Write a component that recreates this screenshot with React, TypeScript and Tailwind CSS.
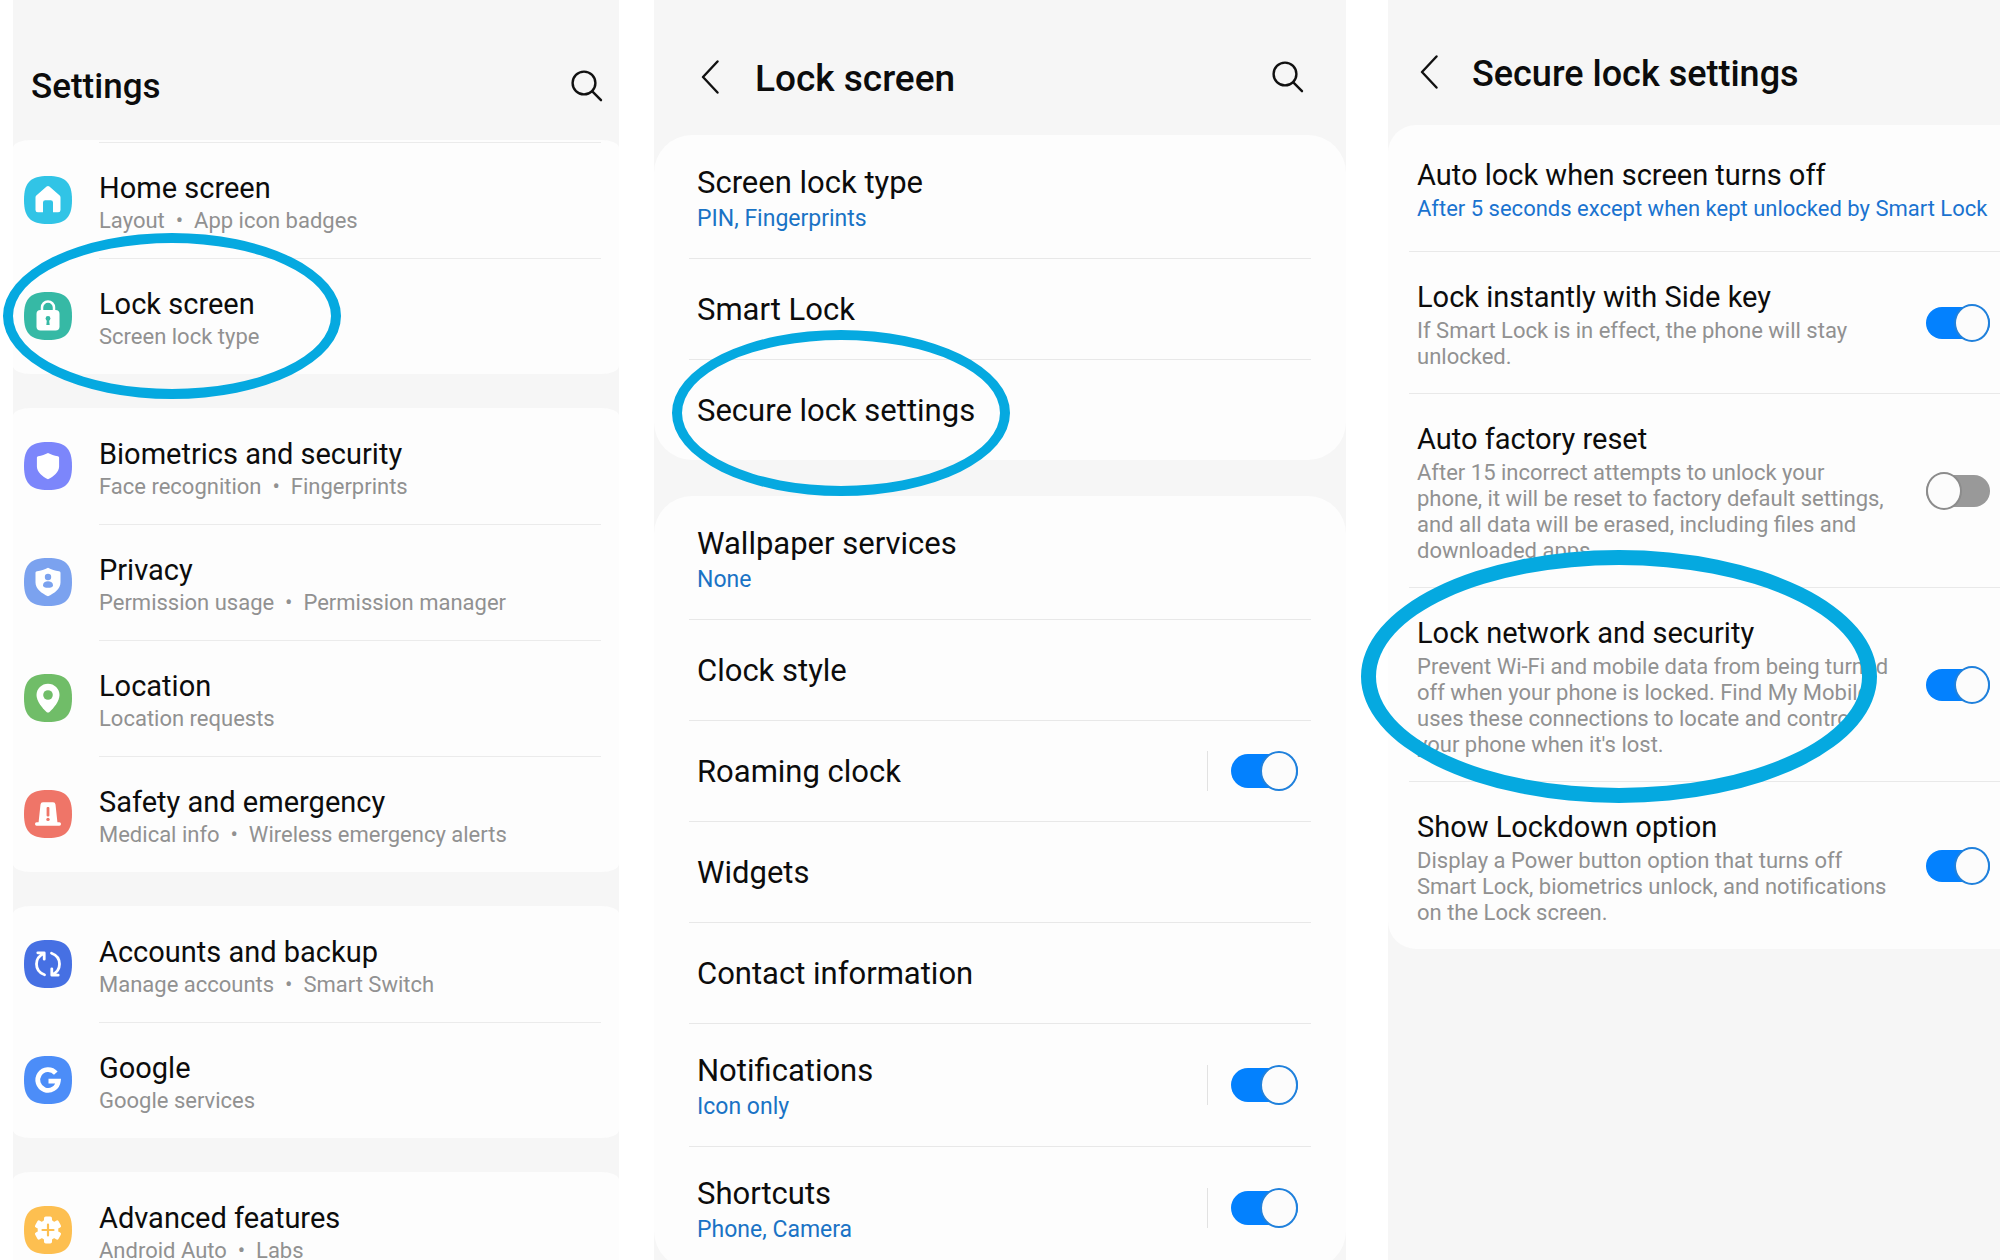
import { useId, useState } from 'react';
import type { ReactNode } from 'react';
import clsx from 'clsx';

const SQUIRCLE = 'M24 0C41.5 0 48 6.5 48 24S41.5 48 24 48 0 41.5 0 24 6.5 0 24 0Z';

function AppIcon({ color, children }: { color: string; children: ReactNode }) {
    return (
        <svg viewBox="0 0 48 48" className="size-12 shrink-0" aria-hidden="true">
            <path d={SQUIRCLE} fill={color} />
            {children}
        </svg>
    );
}

const icons = {
    home: (
        <AppIcon color="#31c4e6">
            <path
                d="M22.6 10.6a2 2 0 0 1 2.8 0l10 8.6c.8.7 1.1 1.4 1.1 2.4V34a2.3 2.3 0 0 1-2.3 2.3H29V26.5a2.3 2.3 0 0 0-2.3-2.3h-5.4a2.3 2.3 0 0 0-2.3 2.3v9.8h-5.2a2.3 2.3 0 0 1-2.3-2.3V21.6c0-1 .3-1.7 1.1-2.4z"
                fill="#fff"
            />
        </AppIcon>
    ),
    lock: (
        <AppIcon color="#36b9a5">
            <path d="M18 20v-4.5a6 6 0 0 1 12 0V20" fill="none" stroke="#fff" strokeWidth="2.5" />
            <rect x="12.5" y="18" width="23" height="20.5" rx="4" fill="#fff" />
            <circle cx="24" cy="26.5" r="2.4" fill="#36b9a5" />
            <path d="M23 27h2l.7 6h-3.4z" fill="#36b9a5" />
        </AppIcon>
    ),
    shield: (
        <AppIcon color="#7c86fb">
            <path
                d="M24 11c3 1.6 6.2 2.7 9.8 3.2.8.1 1.3.7 1.3 1.5v8.8c0 5.6-5.6 10.2-11.1 12.7-5.5-2.5-11.1-7.1-11.1-12.7v-8.8c0-.8.5-1.4 1.3-1.5 3.6-.5 6.8-1.6 9.8-3.2z"
                fill="#fff"
            />
        </AppIcon>
    ),
    privacy: (
        <AppIcon color="#7ba2ef">
            <path
                d="M24 9.7c3.5 1.7 7 2.9 11 3.5.9.1 1.5.8 1.5 1.7v9.6c0 6.2-6.5 11.1-12.5 13.8-6-2.7-12.5-7.6-12.5-13.8v-9.6c0-.9.6-1.6 1.5-1.7 4-.6 7.5-1.8 11-3.5z"
                fill="#fff"
            />
            <circle cx="24" cy="19" r="3.2" fill="#7ba2ef" />
            <path d="M19 27.2c0-2.5 2.2-3.9 5-3.9s5 1.4 5 3.9c0 1.8-2.2 2.6-5 2.6s-5-.8-5-2.6z" fill="#7ba2ef" />
        </AppIcon>
    ),
    location: (
        <AppIcon color="#70bd68">
            <path
                d="M24 9.7c6.3 0 11.5 4.9 11.5 11.2 0 6-5.5 12.8-10 17-.9.8-2.1.8-3 0-4.5-4.2-10-11-10-17C12.5 14.6 17.7 9.7 24 9.7z"
                fill="#fff"
            />
            <circle cx="24" cy="21" r="4.8" fill="#70bd68" />
        </AppIcon>
    ),
    safety: (
        <AppIcon color="#ef7568">
            <path d="M19 12.3h10a2.5 2.5 0 0 1 2.5 2.2L33.5 33h-19l2-18.5a2.5 2.5 0 0 1 2.5-2.2z" fill="#fff" />
            <rect x="11" y="32.3" width="26" height="3.4" rx="1.6" fill="#fff" />
            <rect x="22.6" y="17" width="2.8" height="9.5" rx="1" fill="#ef7568" />
            <circle cx="24" cy="29.4" r="1.7" fill="#ef7568" />
        </AppIcon>
    ),
    sync: (
        <AppIcon color="#4670e3">
            <g fill="none" stroke="#fff" strokeWidth="2.8" strokeLinecap="round" strokeLinejoin="round">
                <path d="M20.5 34.8C15.5 33 12.5 28.8 12.5 24c0-4.7 2.8-8.6 7.2-10.6" />
                <path d="M13.8 12.8h6.4v6.4" />
                <path d="M27.5 13.2C32.5 15 35.5 19.2 35.5 24c0 4.7-2.8 8.6-7.2 10.6" />
                <path d="M34.2 35.2h-6.4v-6.4" />
            </g>
        </AppIcon>
    ),
    google: (
        <AppIcon color="#4c8df8">
            <path d="M31.8 17.2A10.3 10.3 0 1 0 34.3 25.2H24.5" fill="none" stroke="#fff" strokeWidth="4.8" />
        </AppIcon>
    ),
    advanced: (
        <AppIcon color="#fdbf50">
            <g fill="#fff">
                <circle cx="24" cy="24" r="10.4" />
                <rect x="20" y="10.5" width="8" height="27" rx="1.8" />
                <rect x="20" y="10.5" width="8" height="27" rx="1.8" transform="rotate(60 24 24)" />
                <rect x="20" y="10.5" width="8" height="27" rx="1.8" transform="rotate(120 24 24)" />
            </g>
            <path d="M24 18.5v11M18.5 24h11" stroke="#fdbf50" strokeWidth="2.2" strokeLinecap="round" />
        </AppIcon>
    ),
};

function SearchButton() {
    return (
        <button type="button" aria-label="Search" className="shrink-0">
            <svg viewBox="0 0 32 32" className="size-8" fill="none" stroke="#111" strokeWidth="2.4" strokeLinecap="round">
                <circle cx="13" cy="13" r="11.4" />
                <path d="M21.3 21.3 30 30.2" />
            </svg>
        </button>
    );
}

function BackButton() {
    return (
        <button type="button" aria-label="Back" className="shrink-0">
            <svg viewBox="0 0 18 34" className="h-[34px] w-[18px]" fill="none" stroke="#111" strokeWidth="2.4" strokeLinecap="round" strokeLinejoin="round">
                <path d="M16.5 1.5 2 17l14.5 15.5" />
            </svg>
        </button>
    );
}

function Switch({ id, defaultOn, large }: { id: string; defaultOn: boolean; large?: boolean }) {
    const [on, setOn] = useState(defaultOn);
    return (
        <input
            id={id}
            type="checkbox"
            role="switch"
            checked={on}
            onChange={(e) => setOn(e.target.checked)}
            className={clsx(
                'flex shrink-0 cursor-pointer appearance-none items-center rounded-full bg-[#999999]',
                'before:shrink-0 before:rounded-[50%] before:border-2 before:border-[#8c8c8c] before:bg-[#fcfcfc]',
                'checked:justify-end checked:bg-[#0381fe] checked:before:border-[#2081dc]',
                large ? 'h-[34px] w-[67px] before:h-10 before:w-[38px]' : 'h-8 w-16 before:h-[38px] before:w-9'
            )}
        />
    );
}

interface SettingsItem {
    icon: ReactNode;
    title: string;
    sub: string[];
    circled?: boolean;
}

const settingsGroups: SettingsItem[][] = [
    [
        { icon: icons.home, title: 'Home screen', sub: ['Layout', 'App icon badges'] },
        { icon: icons.lock, title: 'Lock screen', sub: ['Screen lock type'], circled: true },
    ],
    [
        { icon: icons.shield, title: 'Biometrics and security', sub: ['Face recognition', 'Fingerprints'] },
        { icon: icons.privacy, title: 'Privacy', sub: ['Permission usage', 'Permission manager'] },
        { icon: icons.location, title: 'Location', sub: ['Location requests'] },
        { icon: icons.safety, title: 'Safety and emergency', sub: ['Medical info', 'Wireless emergency alerts'] },
    ],
    [
        { icon: icons.sync, title: 'Accounts and backup', sub: ['Manage accounts', 'Smart Switch'] },
        { icon: icons.google, title: 'Google', sub: ['Google services'] },
    ],
    [{ icon: icons.advanced, title: 'Advanced features', sub: ['Android Auto', 'Labs'] }],
];

function SettingsPanel() {
    return (
        <section className="flex-[606] bg-[#f6f6f6]">
            <header className="flex h-[140px] items-center justify-between pt-8 pr-4 pl-[18px]">
                <h1 className="pt-0.5 text-[35px] leading-[40px] font-medium">Settings</h1>
                <SearchButton />
            </header>
            <div className="flex flex-col gap-[34px]">
                {settingsGroups.map((group, g) => (
                    <div key={group[0].title} className={clsx('rounded-[18px/8px] bg-[#fdfdfd]', g === 0 && 'pt-0.5')}>
                        {group.map((item, i) => (
                            <button key={item.title} type="button" className="relative flex h-[116px] w-full items-center gap-[27px] pr-[18px] pl-[11px] text-left">
                                {item.icon}
                                <span className={clsx('flex h-full flex-1 flex-col justify-center border-t pt-0.5', i > 0 || g === 0 ? 'border-[#ebebeb]' : 'border-transparent')}>
                                    <span className="block text-[29px] leading-[38px]">{item.title}</span>
                                    <span className="block text-[22px] leading-[28px] text-[#919191]">{item.sub.join('\u00a0 • \u00a0')}</span>
                                </span>
                                {item.circled && (
                                    <span className="pointer-events-none absolute -top-[25px] -left-[10px] z-10 h-[166px] w-[338px] rounded-[50%] border-10 border-[#05a9e0]" />
                                )}
                            </button>
                        ))}
                    </div>
                ))}
            </div>
        </section>
    );
}

interface LockItem {
    title: string;
    sub?: string;
    toggle?: boolean;
    circled?: boolean;
}

const lockGroups: LockItem[][] = [
    [
        { title: 'Screen lock type', sub: 'PIN, Fingerprints' },
        { title: 'Smart Lock' },
        { title: 'Secure lock settings', circled: true },
    ],
    [
        { title: 'Wallpaper services', sub: 'None' },
        { title: 'Clock style' },
        { title: 'Roaming clock', toggle: true },
        { title: 'Widgets' },
        { title: 'Contact information' },
        { title: 'Notifications', sub: 'Icon only', toggle: true },
        { title: 'Shortcuts', sub: 'Phone, Camera', toggle: true },
    ],
];

function LockRow({ item, first }: { item: LockItem; first: boolean }) {
    const id = useId();
    const rowClass = clsx(
        'relative flex items-center justify-between border-t pr-[13px] pl-2 text-left',
        item.sub ? 'h-[123px]' : 'h-[101px]',
        first ? 'border-transparent' : 'border-[#e8e8e8]'
    );
    const text = (
        <>
            <span className="block text-[31px] leading-[42px]">{item.title}</span>
            {item.sub && <span className="block text-[23px] leading-[30px] text-[#1a73c5]">{item.sub}</span>}
        </>
    );

    if (item.toggle) {
        return (
            <div className={rowClass}>
                <label htmlFor={id} className="pt-0.5">{text}</label>
                <div className="flex items-center gap-[23px]">
                    <div className="h-10 w-px bg-[#e2e2e2]" />
                    <Switch id={id} defaultOn large />
                </div>
            </div>
        );
    }

    return (
        <button type="button" className={clsx(rowClass, 'w-full')}>
            <span className="pt-0.5">{text}</span>
            {item.circled && (
                <span className="pointer-events-none absolute -top-[30px] -left-[17px] z-10 h-[166px] w-[338px] rounded-[50%] border-10 border-[#05a9e0]" />
            )}
        </button>
    );
}

function LockScreenPanel() {
    return (
        <section className="ml-[35px] flex-[692] bg-[#f6f6f6]">
            <header className="flex h-[135px] items-center pt-[18px] pr-[42px] pl-[47px]">
                <BackButton />
                <h1 className="ml-9 flex-1 pt-1 text-[37px] leading-[40px] font-medium">Lock screen</h1>
                <SearchButton />
            </header>
            <div className="flex flex-col gap-9">
                {lockGroups.map((group) => (
                    <div key={group[0].title} className="rounded-[38px] bg-[#fdfdfd] px-[35px]">
                        {group.map((item, i) => (
                            <LockRow key={item.title} item={item} first={i === 0} />
                        ))}
                    </div>
                ))}
            </div>
        </section>
    );
}

interface SecureItem {
    title: string;
    sub: string;
    on: boolean;
    circled?: boolean;
}

const secureItems: SecureItem[] = [
    {
        title: 'Lock instantly with Side key',
        sub: 'If Smart Lock is in effect, the phone will stay unlocked.',
        on: true,
    },
    {
        title: 'Auto factory reset',
        sub: 'After 15 incorrect attempts to unlock your phone, it will be reset to factory default settings, and all data will be erased, including files and downloaded apps.',
        on: false,
    },
    {
        title: 'Lock network and security',
        sub: "Prevent Wi-Fi and mobile data from being turned off when your phone is locked. Find My Mobile uses these connections to locate and control your phone when it's lost.",
        on: true,
        circled: true,
    },
    {
        title: 'Show Lockdown option',
        sub: 'Display a Power button option that turns off Smart Lock, biometrics unlock, and notifications on the Lock screen.',
        on: true,
    },
];

function SecureRow({ item }: { item: SecureItem }) {
    const id = useId();
    return (
        <div className="relative flex items-center gap-[34px] border-t border-[#e9e9e9] pt-6 pr-[10px] pb-[23px] pl-2">
            <label htmlFor={id} className="flex-1">
                <span className="block text-[29px] leading-[42px]">{item.title}</span>
                <span className="block text-[22px] leading-[26px] text-[#919191]">{item.sub}</span>
            </label>
            <Switch id={id} defaultOn={item.on} />
            {item.circled && (
                <span className="pointer-events-none absolute -top-[38px] -left-12 z-10 h-[253px] w-[516px] rounded-[50%] border-15 border-[#05a9e0]" />
            )}
        </div>
    );
}

function SecureLockPanel() {
    return (
        <section className="ml-[42px] flex-[612] bg-[#f6f6f6]">
            <header className="flex h-[125px] items-center pt-[18px] pl-8">
                <BackButton />
                <h1 className="ml-[34px] pt-1 text-[36px] leading-[40px] font-medium">Secure lock settings</h1>
            </header>
            <div className="rounded-l-[28px] bg-[#fdfdfd] pl-[21px]">
                <button type="button" className="flex h-[126px] w-full flex-col justify-center pl-2 text-left">
                    <span className="block text-[29px] leading-[42px]">Auto lock when screen turns off</span>
                    <span className="block text-[22px] leading-[26px] whitespace-nowrap text-[#1a73d0]">
                        After 5 seconds except when kept unlocked by Smart Lock
                    </span>
                </button>
                {secureItems.map((item) => (
                    <SecureRow key={item.title} item={item} />
                ))}
            </div>
        </section>
    );
}

export default function App() {
    return (
        <main className="flex h-screen overflow-hidden bg-white pl-[13px] font-['Roboto',sans-serif] text-[#0c0c0c]">
            <SettingsPanel />
            <LockScreenPanel />
            <SecureLockPanel />
        </main>
    );
}
